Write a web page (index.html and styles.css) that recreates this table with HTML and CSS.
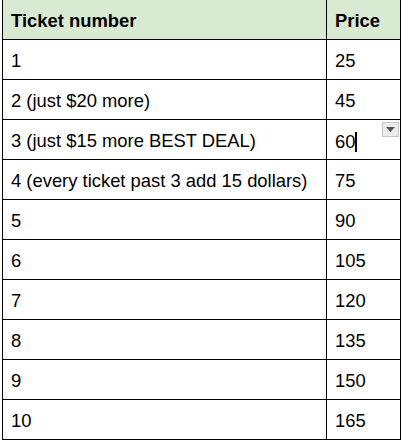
FILE: index.html
```html
<!DOCTYPE html>
<html>
<head>
<meta charset="utf-8">
<link rel="stylesheet" href="styles.css">
</head>
<body>
<table class="sheet">
  <tr class="head"><th class="c1">Ticket number</th><th class="c2">Price</th></tr>
  <tr><td>1</td><td>25</td></tr>
  <tr><td>2 (just $20 more)</td><td>45</td></tr>
  <tr><td>3 (just $15 more BEST DEAL)</td><td class="active"><span class="val">60</span><span class="caret"></span><span class="dd"><svg width="9" height="5" viewBox="0 0 9 5"><path d="M0 0H9L4.5 5Z" fill="#555"/></svg></span></td></tr>
  <tr><td>4 (every ticket past 3 add 15 dollars)</td><td>75</td></tr>
  <tr><td>5</td><td>90</td></tr>
  <tr><td>6</td><td>105</td></tr>
  <tr><td>7</td><td>120</td></tr>
  <tr><td>8</td><td>135</td></tr>
  <tr><td>9</td><td>150</td></tr>
  <tr><td>10</td><td>165</td></tr>
</table>
</body>
</html>
```
FILE: styles.css
```css
html, body { margin: 0; padding: 0; background: #fff; }
body { padding: 0 2px 0 2px; font-family: "Liberation Sans", Arial, sans-serif; }
.sheet { border-collapse: collapse; width: 399px; table-layout: fixed; font-size: 18.4px; color: #000; margin-top: -1px; }
.sheet td, .sheet th { border: 1px solid #000; height: 40px; padding: 3px 0 0 8px; text-align: left; vertical-align: middle; box-sizing: border-box; }
.sheet th { background: #d9ead3; font-weight: bold; }
.c1 { width: 324px; }
.active { position: relative; }
.val { display: inline-block; vertical-align: middle; }
.caret { display: inline-block; width: 2px; height: 20px; background: #000; vertical-align: middle; margin-left: 0; }
.dd { position: absolute; right: 1px; top: 2px; width: 17px; height: 15px; background: #ececec; border: 1px solid #c8c8c8; box-sizing: border-box; display: flex; align-items: center; justify-content: center; }
```
